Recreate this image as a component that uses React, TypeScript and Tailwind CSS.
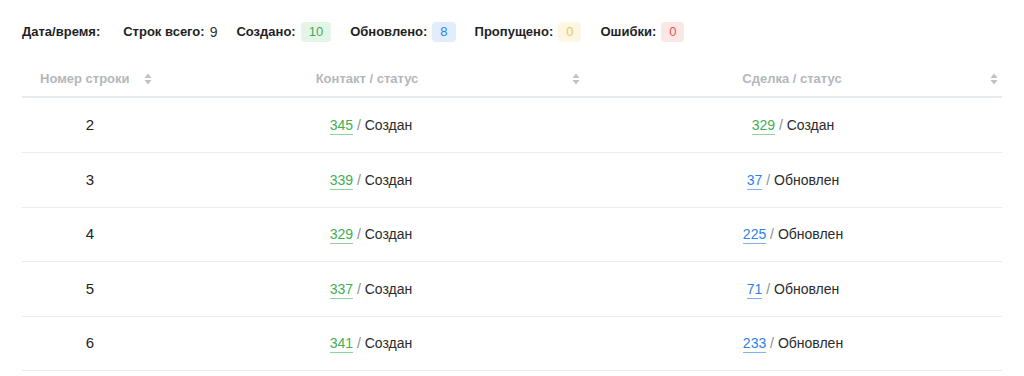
import React from "react";

const rows = [
  { n: 2, c: 345, cs: "Создан", d: 329, ds: "Создан", h: "h-[55px]" },
  { n: 3, c: 339, cs: "Создан", d: 37, ds: "Обновлен", h: "h-[55px]" },
  { n: 4, c: 329, cs: "Создан", d: 225, ds: "Обновлен", h: "h-[54px]" },
  { n: 5, c: 337, cs: "Создан", d: 71, ds: "Обновлен", h: "h-[55px]" },
  { n: 6, c: 341, cs: "Создан", d: 233, ds: "Обновлен", h: "h-[54px]" },
];

function SortIcon() {
  return (
    <svg width="8" height="12" viewBox="0 0 8 12" className="shrink-0">
      <path d="M4 0.5 L7.5 5 L0.5 5 Z" fill="#bfc2c7" />
      <path d="M4 11.5 L7.5 7 L0.5 7 Z" fill="#bfc2c7" />
    </svg>
  );
}

function Badge({ v, cls }: { v: string; cls: string }) {
  return (
    <span className={`inline-flex h-[20px] items-center rounded-[4px] px-[8px] text-[13px] font-normal ${cls}`}>{v}</span>
  );
}

function Link({ v, kind }: { v: number; kind: "created" | "updated" }) {
  const cls =
    kind === "created"
      ? "text-[#3fae56] border-[#8fd49c]"
      : "text-[#2f80ed] border-[#7fb2f5]";
  return <span className={`border-b pb-[1px] ${cls}`}>{v}</span>;
}

function Cell({ v, s }: { v: number; s: string }) {
  return (
    <span>
      <Link v={v} kind={s === "Создан" ? "created" : "updated"} />
      <span className="text-[#8a8d93]"> / </span>
      <span className="text-[#2b2b2b]">{s}</span>
    </span>
  );
}

export default function App() {
  return (
    <div
      className="w-[1024px] h-[376px] overflow-hidden bg-white px-[22px] pt-[22px]"
      style={{ fontFamily: "'Liberation Sans', Arial, sans-serif" }}
    >
      <div className="flex h-[20px] items-center gap-[19px] text-[13px] font-bold text-[#1f1f1f]">
        <span className="mr-[4px]">Дата/время:</span>
        <span className="flex items-center gap-[5px]">
          Строк всего: <span className="text-[14px] font-normal text-[#333]">9</span>
        </span>
        <span className="flex items-center gap-[5px]">
          Создано: <Badge v="10" cls="bg-[#e4f5e8] text-[#3fae56]" />
        </span>
        <span className="flex items-center gap-[5px]">
          Обновлено: <Badge v="8" cls="bg-[#e1edfc] text-[#2f80ed]" />
        </span>
        <span className="flex items-center gap-[5px]">
          Пропущено: <Badge v="0" cls="bg-[#fdf6e2] text-[#f3c545]" />
        </span>
        <span className="flex items-center gap-[5px]">
          Ошибки: <Badge v="0" cls="bg-[#fde6e6] text-[#ef5350]" />
        </span>
      </div>

      <div className="mt-[19px] w-[980px]">
        <div className="grid h-[37px] grid-cols-[136px_432px_412px] items-center border-b-2 border-[#e6e9ee] text-[13px] font-bold text-[#b4b7bc]">
          <div className="flex items-center gap-[14px] pl-[18px]">
            <span>Номер строки</span>
            <SortIcon />
          </div>
          <div className="flex items-center pl-[16px] pr-[10px]">
            <span className="flex-1 pr-[12px] text-center">Контакт / статус</span>
            <SortIcon />
          </div>
          <div className="flex items-center pl-[16px] pr-[4px]">
            <span className="flex-1 pr-[12px] text-center">Сделка / статус</span>
            <SortIcon />
          </div>
        </div>
        {rows.map((r) => (
          <div
            key={r.n}
            className={`grid ${r.h} grid-cols-[136px_432px_412px] items-center border-b border-[#ececec] text-center text-[14px]`}
          >
            <div className="text-[15px] text-[#222]">{r.n}</div>
            <div className="pr-[6px]">
              <Cell v={r.c} s={r.cs} />
            </div>
            <div className="pr-[6px]">
              <Cell v={r.d} s={r.ds} />
            </div>
          </div>
        ))}
      </div>
    </div>
  );
}
